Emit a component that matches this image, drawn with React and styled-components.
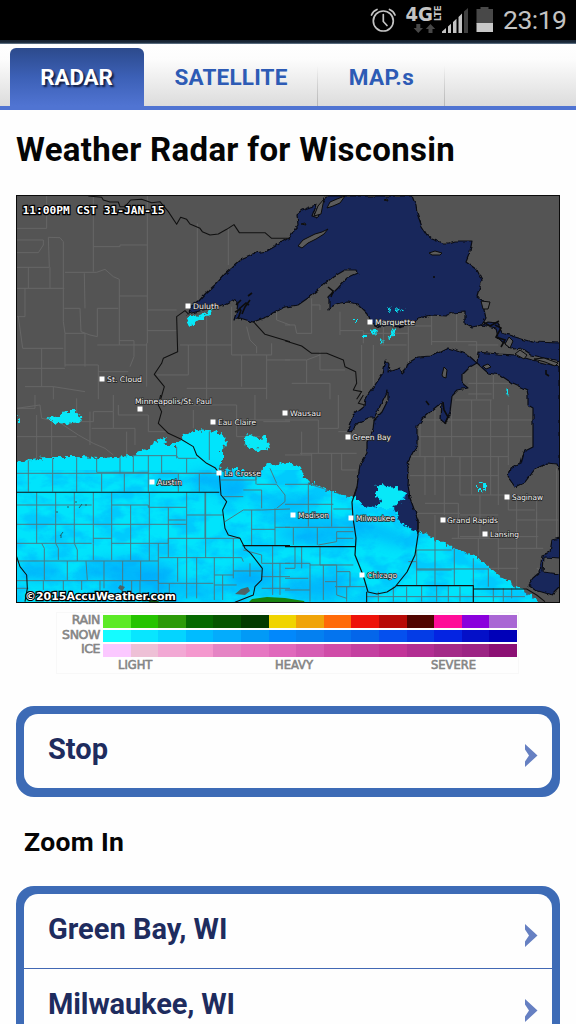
import React from 'react'
import { styled, createGlobalStyle } from 'styled-components'

const GlobalStyle = createGlobalStyle`
  * {
    box-sizing: border-box;
  }
  body {
    margin: 0;
    background: #fefefe;
    font-family: Roboto, "Liberation Sans", sans-serif;
  }
`;

const Page = styled.div`
  width: 576px;
  height: 1024px;
  overflow: hidden;
  display: flex;
  flex-direction: column;
  background: #fefefe;
`;

const StatusBar = styled.div`
  height: 40px;
  flex: none;
  background: #000;
  color: #c3c3c3;
  display: flex;
  justify-content: flex-end;
  align-items: center;
  padding-right: 9px;
`;

const Clock = styled.span`
  width: 64px;
  margin-left: 5px;
  font-size: 26.5px;
  line-height: 40px;
  white-space: nowrap;
  letter-spacing: -0.5px;
`;

const TopStrip = styled.div`
  height: 4px;
  flex: none;
  background: linear-gradient(#17212f 0, #1b2a3b 60%, #71869a 100%);
`;

const Tabs = styled.nav`
  height: 66px;
  flex: none;
  display: flex;
  align-items: flex-end;
  padding-left: 10px;
  border-bottom: 4px solid #5074d2;
  background: linear-gradient(#fff 0, #fcfcfc 25%, #dcdcdc 100%);
`;

const Tab = styled.a`
  width: ${(props) => props.$width}px;
  height: 58px;
  display: flex;
  align-items: center;
  justify-content: center;
  padding-right: ${(props) => (props.$active ? 1 : 0)}px;
  font-size: 22.5px;
  font-weight: 700;
  letter-spacing: ${(props) => props.$spacing || 0}px;
  color: ${(props) => (props.$active ? "#fff" : "#2d5bb5")};
  text-shadow: ${(props) => (props.$active ? "2px 2px 2px #101c40" : "none")};
  border-radius: 6px 6px 0 0;
  background: ${(props) =>
    props.$active
      ? "linear-gradient(#2c4a8c, #3c60b6 50%, #5074d2)"
      : "linear-gradient(rgba(150,150,150,0) 30%, #b8b8b8) right / 1.5px 100% no-repeat"};
`;

const Title = styled.h1`
  margin: 0;
  height: 85px;
  flex: none;
  padding-left: 16px;
  font-size: 33px;
  line-height: 80px;
  font-weight: 700;
  letter-spacing: 0.31px;
  color: #050505;
`;

const MapFrame = styled.div`
  width: 544px;
  height: 408px;
  flex: none;
  margin-left: 16px;
  svg {
    display: block;
  }
`;

const Legend = styled.div`
  width: 463px;
  height: 62px;
  flex: none;
  margin: 9px 0 0 56px;
  padding-top: 2px;
  border: 1px solid #f8f8f8;
  color: #858585;
  font-family: "DejaVu Sans", sans-serif;
  font-size: 12.5px;
  -webkit-text-stroke: 0.6px #858585;
`;

const LegendRow = styled.div`
  display: grid;
  grid-template-columns: 43px 414px;
  column-gap: 3px;
  height: 14.5px;
  line-height: 10px;
  text-align: right;
  letter-spacing: -0.4px;
`;

const Scale = styled.div`
  display: flex;
  height: 12.5px;
`;

const Swatch = styled.span`
  flex: 1;
  background: ${(props) => props.$color};
`;

const Levels = styled.div`
  display: grid;
  grid-template-columns: 157px 156px 50px;
  padding-left: 61px;
  line-height: 12px;
  font-size: 11.5px;
  letter-spacing: 0;
`;

const Card = styled.div`
  width: 544px;
  flex: none;
  margin: ${(props) => props.$top}px 0 0 16px;
  border: 8px solid #3d6bb6;
  border-bottom-width: 9px;
  border-radius: 18px;
  background: #3d6bb6;
`;

const CardBody = styled.div`
  border-radius: 14px;
  overflow: hidden;
  background: #fefefe;
`;

const Row = styled.div`
  height: ${(props) => (props.$divider ? 75 : 74)}px;
  display: flex;
  justify-content: space-between;
  padding: 0 14px 0 24px;
  border-bottom: ${(props) => (props.$divider ? "1.5px solid #4268b4" : "none")};
  font-size: 29px;
  line-height: 70px;
  font-weight: 700;
  letter-spacing: ${(props) => props.$spacing || 0}px;
  color: #1e2c5e;
  svg {
    margin-top: 29px;
  }
`;

const Heading = styled.h2`
  margin: 28px 0 0 24px;
  height: 34px;
  flex: none;
  font-size: 26.5px;
  line-height: 33px;
  font-weight: 700;
  letter-spacing: 0.35px;
  color: #050505;
`;

const legend = [
  {
    name: "RAIN",
    colors: ["#5cea26", "#26c400", "#2c9a08", "#056900", "#065500", "#033b00", "#f0d400", "#f0a408", "#ff6a08", "#ee1208", "#b80a06", "#500400", "#ff0c98", "#8a00dc", "#a966d4"],
  },
  {
    name: "SNOW",
    colors: ["#14fcff", "#08e6ff", "#04d4ff", "#00bcff", "#04acfc", "#029af6", "#0288fb", "#0480f0", "#0474ee", "#0466ea", "#0550ee", "#043ce6", "#0424e2", "#0410c8", "#0000b8"],
  },
  {
    name: "ICE",
    colors: ["#fbc8ff", "#eec0d6", "#f2a8d4", "#f498ce", "#e584c4", "#e676c2", "#e068bc", "#d65cb4", "#d04ca8", "#c440a0", "#c23498", "#b22e92", "#a42a88", "#9c2484", "#8c1074"],
  },
];

const cities = [
  { name: "Duluth", x: 188, y: 306, tx: 193, w: 26 },
  { name: "Marquette", x: 370, y: 322, tx: 375, w: 40 },
  { name: "St. Cloud", x: 102, y: 379, tx: 107, w: 35 },
  { name: "Minneapolis/St. Paul", x: 140, y: 409, tx: 135, ty: 401, w: 77 },
  { name: "Eau Claire", x: 213, y: 422, tx: 218, w: 38 },
  { name: "Wausau", x: 285, y: 413, tx: 290, w: 31 },
  { name: "Green Bay", x: 348, y: 437, tx: 352, w: 39 },
  { name: "La Crosse", x: 219, y: 473, tx: 224, w: 37 },
  { name: "Austin", x: 152, y: 482, tx: 157, w: 25 },
  { name: "Madison", x: 293, y: 515, tx: 298, w: 31 },
  { name: "Milwaukee", x: 351, y: 518, tx: 356, w: 39 },
  { name: "Grand Rapids", x: 443, y: 520, tx: 447, w: 51 },
  { name: "Saginaw", x: 507, y: 497, tx: 512, w: 31 },
  { name: "Lansing", x: 485, y: 534, tx: 490, w: 29 },
  { name: "Chicago", x: 362, y: 575, tx: 367, w: 30 },
];

const superior = "M188 314L190 307L198 302L206 293L217 283L225 274L232 268L243 258L255 253L267 251L279 244L290 237L294 230L298 225L297 214L302 210L310 207L316 205L312 216L318 218L321 206L326 196H412L416 206L417 213L422 227L427 235L432 239L442 243L449 243L455 241H472L470 252L466 262L473 267L477 270L482 280L479 290L477 297L485 302L484 310L486 318L482 325L472 327L465 323V312L452 313L445 316L432 315L418 318L410 324L398 327L388 325L380 327L370 322L367 314L357 304L348 302L340 303L335 305L331 307L329 310V297L338 288L347 278L358 273L357 270L345 270L333 277L323 285L317 291L308 298L298 305L285 307L277 310L267 317L253 322L240 318L234 320L237 310L238 302L232 300L223 305L207 309Z";

const michigan = "M477 363L468 355L458 351L448 348L438 353L432 356L418 357L408 363L406 369L402 373L400 368L388 372L389 364L386 360L383 373L375 385L365 399L364 406L353 415L347 431L351 432L358 423L368 418L374 418L381 404L388 390L388 400L382 412L374 420L373 430L367 442V453L360 465L357 487L352 502L353 518L356 538L355 555L363 575L368 592L377 594L387 592L395 587L407 572L415 555L418 535V520L410 498L408 485L409 470L407 463L417 445V427L423 418L430 412L442 402L441 420L445 423L450 412L452 396L458 390L468 388L462 383V375L470 367Z";

const huron = "M477 363L478 352L498 354L515 355L532 360L560 367V472L557 464L548 463L535 469L525 482L515 487L508 477L510 468L520 463L523 452L533 447V408L528 405V395L527 390L512 383L500 375L488 373Z";

const northChannel = "M482 325L488 322L498 323L502 333L515 337L532 342L560 343V361L545 358L532 355L523 349L514 350L505 344L498 338L496 328Z";

const erie = "M560 538L552 540L550 552L542 555L540 572L533 578L528 585L535 590L552 595L560 587V574L543 572L544 557L560 558Z";

const snow = "M14 462L32 460L50 457L77 457L100 458L130 456L140 451L148 449L153 442L167 438L163 445L177 445L183 435L197 430L218 432L227 440L222 450V463L217 470L237 469L258 475L267 463L290 464L300 467L304 477L308 482L328 490L355 498L365 507L379 506L382 501L377 497L379 487L384 484L389 488L396 486L399 492L406 494L405 499L397 503L394 508L400 522L412 530L428 535L452 547L478 558L498 575L518 588L535 598L539 606H14Z";

const landCounties = [
  // northern Minnesota and northwest Wisconsin
  ["10 190", "M20 115H110V18M20 150H100V165L85 188H20M20 232H118L115 142L150 143L160 155V395L165 430V530M55 232V295M120 232V295M20 295H163M250 18V245M250 170H330V165H412M165 247H260L285 238L310 260L328 268V465M223 250L225 355M163 355H210L213 425L240 435L262 440V355H325M328 318H412M412 18V460M412 360H500M412 422H500M45 295V380H20M25 380L38 475H160M95 475V590M20 535H165M165 430H225V530M262 465H330M328 452H372V500L360 530M165 525H265V628M330 465H410M45 590H130V628M130 590L225 605M265 545L355 545M410 460V590M562 100V330M655 115V225M590 370V465M510 465H665M535 465V555L440 555M665 350V495H785V460M710 410L720 450L740 470V490M590 465V628M695 495V590M530 595H770M770 495V628M770 510H840M800 360V390L840 405"],
  // upper Michigan and northeast Wisconsin
  ["285 190", "M80 325V430M80 345H105V360M0 405H30L35 430H80M165 365V435M165 422H235V460M235 430H370M295 378V465M370 410V530M285 465H365M440 378V465M440 455H575V490M515 370V455M370 408H440M550 465H640M230 465V620M265 465V590M0 510H65L105 495M65 510V580M20 580H135V628M105 485V540H180M550 580H735M575 535V628M625 555V628M550 612H620"],
  // southern Minnesota above the snow
  ["10 395", "M20 40L90 30L95 70L145 80L205 120L250 145L285 160L310 180M80 60V190M125 75V185M20 125H200M20 40H75V0M200 10V80H250V50H310V0M240 50V150M310 50V100H375V150M245 100H310M325 30V60H415V110H470M350 110V180M540 30H680V75H840M680 75V125H750M550 45V100M735 75V0M840 80H760"],
  // Wisconsin and lower Michigan
  ["285 395", "M0 75H100V100H160V0M50 110V180M0 180H80M80 175V260M45 175H215M140 175V285M170 175V225H215M100 100V175M160 110H190M400 75H740M400 125H740M380 185H670V210M405 30V185M450 0V300M500 50V185M560 15V300M617 15V300M670 30V185M510 15H620M375 242H640M420 185V300M478 185V360M525 185V300M640 185V330M585 300V430M420 325H520V430M395 355H525M525 300H670V345H750M695 300V575M755 300V460M525 425H760M450 360V440M580 430V480M640 370V525M500 430H640M640 460H775M600 520H700M755 520H760V570M695 375H820M815 220V430M525 360H640M755 350V400"],
];

const snowCounties = [
  ["10 395", "M20 235H620M55 190V290M128 190V290M200 187V290M260 187V232H415M343 235V290M275 235V290M330 187V235M370 182V235M415 180V290M455 180V235M500 155V190M505 235V290M530 190V235M568 235V290M455 235H605M368 182H500L505 190H560M598 110V195M20 330H245M305 330H415V337H530M530 360H640M20 388H530M20 445H245M250 430H305M305 445H475M475 430H690L685 425M20 498H445V445M448 488H695L700 500M20 557H445V565H610M80 292V445M137 292V445M193 292V445M250 292V445M305 292V495M362 330V495M418 292V498M475 337V488M530 292V565M587 292V488M585 292V430M95 445L103 460V555M137 445L145 460V495M193 445L202 465V498M250 445V495M172 498V555M228 498L232 555M282 498V580M338 498V600M392 498V555M445 498V610M503 488V560M560 488V610M613 488V615M670 430V550M475 430V445M527 375H475M613 540H670M613 570H680M670 528H755M160 557V585M215 557V585M100 557V585M270 557V585M365 557V600M390 555V600M530 565V610M478 565V610M638 540V615M20 580H55M633 255H738V220M738 240V268M700 285H755V340M640 305H700M840 342L755 345L700 345L645 380M740 268H800L825 300V320L800 340M780 220L800 265M725 345V450M725 403H795M795 340V450M795 397H840M700 465L755 480V505H840M788 452V600M755 545H840M720 505V545M810 505V600M755 580H840"],
  ["285 395", "M0 268H75L130 285M70 265V395M140 285V395M0 328H145M145 342H200M0 397H205M25 397V450M97 397V450M100 450L155 440V410H205M155 430H205M50 455V520M105 455V510H205M0 505H75V620M75 510H155V600L185 610M0 550H70M30 455V520H0M115 510V615M155 530H195V575H160M150 575H240M185 575V620M120 560H155M0 585H75M395 465V570M370 500H395V525H500M395 465H500M450 435V570M508 460V570M395 522H610M565 490V620M610 520V575M280 590V620M325 575V620M365 575V620M410 572V620M455 572V620M490 572V620M525 575V620M245 605H565M565 605H720M625 580V620M655 580V620M680 580V610"],
];

const borders = [
  // state and national lines
  ["10 190", "M235 18L275 22L280 30L300 36L325 36L330 50L345 50L362 30L395 28L425 38L450 35L475 65L500 103L512 82L530 88L540 102L570 115L577 125L600 135L625 132L650 118L672 104L688 128L765 128L785 145L840 145M535 372L525 362L500 380L503 485L460 505L455 520L433 553L463 590L452 628M730 395L765 433L840 455"],
  ["285 190", "M0 452L50 468L80 490L125 490L175 510L180 530L212 545L215 580L205 600L230 605L215 628"],
  ["10 395", "M452 0L445 30L455 50L445 85L475 115L512 132L550 155L560 180L590 205L615 218L628 235L633 300L650 320L638 345L645 400L655 420L690 430L705 460L722 475L757 520L755 555L735 575L730 600L675 622M20 292H628M698 452H840M20 485L30 515L50 540L52 580L45 620"],
  ["285 395", "M0 455H210M333 572H565V582H725L755 600L780 620M245 590V622M565 582V622M235 0L220 25L240 30"],
];

const outline = { fill: "none", strokeLinejoin: "round" };

function RadarMap() {
  return (
    <svg width="544" height="408" viewBox="16 195 544 408">
      <defs>
        <filter id="ragged" x="-5%" y="-15%" width="110%" height="130%" colorInterpolationFilters="sRGB">
          <feTurbulence type="fractalNoise" baseFrequency="0.24" numOctaves="2" seed="4" />
          <feDisplacementMap in="SourceGraphic" scale="9" xChannelSelector="R" yChannelSelector="G" />
        </filter>
        <filter id="coast" x="-5%" y="-5%" width="110%" height="110%" colorInterpolationFilters="sRGB">
          <feTurbulence type="fractalNoise" baseFrequency="0.15" numOctaves="2" seed="8" />
          <feDisplacementMap in="SourceGraphic" scale="4" xChannelSelector="R" yChannelSelector="G" />
        </filter>
        <filter id="grain" x="0" y="0" width="100%" height="100%" colorInterpolationFilters="sRGB">
          <feTurbulence type="fractalNoise" baseFrequency="0.04 0.07" numOctaves="5" seed="12" />
          <feColorMatrix values="0 0 0 0 0  0 0 0 0 0.66  0 0 0 0 1  3.4 0 0 0 -1.35" />
        </filter>
        <filter id="soft" x="-50%" y="-50%" width="200%" height="200%" colorInterpolationFilters="sRGB">
          <feGaussianBlur stdDeviation="7" />
        </filter>
        <clipPath id="snowClip">
          <path d={snow} />
        </clipPath>
      </defs>

      <rect x="16" y="195" width="544" height="408" fill="#545454" />
      <g stroke="#666" strokeWidth="3" {...outline}>
        {landCounties.map(([at, d]) => (
          <path key={at} transform={`translate(${at}) scale(.3333)`} d={d} />
        ))}
      </g>

      <g fill="#18275b" stroke="#0a0c14" strokeWidth="1.2" strokeLinejoin="round" filter="url(#coast)">
        <path d={superior} />
        <path d={michigan} />
        <path d={huron} />
        <path d={northChannel} />
        <path d={erie} />
      </g>
      <g fill="#5b5b5b" stroke="#0c0c0c" strokeWidth="1">
        <path d="M298 246L303 240L309 237L315 234L322 232L328 229L324 234L316 239L308 243L302 248ZM314 216L318 206L324 199L321 214ZM327 208L330 202L337 199L345 196L340 203L333 206ZM429 253L435 251L442 253L440 255H432ZM384 200L387 199L388 201ZM442 375L444 367L447 370L446 378L443 377ZM301 224L305 223L306 225ZM505 344L509 337L513 341L510 348ZM515 354L520 350L527 355L524 359ZM534 359L544 358L558 363L555 366L545 362ZM483 366L488 364L491 367L486 369ZM481 301L490 302L488 309L483 309Z" />
        <path d="M236 305L241 300M239 309L246 303L249 305M242 314L245 307L250 300M238 319L241 310M235 312L241 309M248 296L252 293M328 287L333 291L331 297M434 276V278M495 325L501 328L496 337L505 340L501 347M483 322L490 326L499 321M399 327L406 324L411 321M546 370V374L549 376M443 402L444 410L448 417L445 424M426 401L429 405" fill="none" strokeWidth="1.6" />
      </g>

      <path d={snow} fill="#00e4fc" filter="url(#ragged)" />
      <g clipPath="url(#snowClip)">
        <rect x="16" y="470" width="544" height="133" filter="url(#grain)" opacity=".42" />
        <g fill="#00a4fb" filter="url(#soft)" opacity=".72">
          <ellipse cx="130" cy="571" rx="46" ry="12" />
          <ellipse cx="213" cy="481" rx="26" ry="9" />
          <ellipse cx="234" cy="490" rx="15" ry="9" />
          <ellipse cx="319" cy="534" rx="44" ry="9" />
          <ellipse cx="380" cy="532" rx="34" ry="7" transform="rotate(20 380 532)" />
          <ellipse cx="255" cy="578" rx="26" ry="13" />
          <ellipse cx="320" cy="588" rx="34" ry="12" />
          <ellipse cx="290" cy="505" rx="28" ry="9" />
          <ellipse cx="40" cy="571" rx="23" ry="9" />
          <ellipse cx="170" cy="589" rx="60" ry="7" />
        </g>
      </g>
      <g fill="#08e8f8" filter="url(#ragged)">
        <path d="M46 417L58 418L64 411L77 411L76 416L84 418L80 422L66 424L53 422ZM243 437L252 435L257 438L267 437L269 445L266 451L257 450L245 445ZM17 416L20 418V422H17ZM187 324L191 315L199 316L214 308L209 315L199 320L190 327ZM376 488L383 483L388 488L398 487L405 494L400 501L394 508H378L382 500L377 497Z" />
        <path d="M371 326L375 331L376 336L372 332ZM387 307L391 309L390 313ZM396 307L400 308L398 313ZM388 337L392 331L395 333L391 338ZM380 338L383 341L380 343ZM401 309L404 310L401 312ZM363 335H367V338H363ZM354 319H357V321H354ZM375 308L378 311M505 389L509 391L508 396ZM392 325L396 329L394 333ZM475 485H478V488H475ZM479 482L482 482L480 485ZM483 484H487V487H483ZM477 489H480V491H477ZM483 489L485 489L483 492Z" />
      </g>

      <g clipPath="url(#snowClip)" stroke="#4a7a86" strokeWidth="3" {...outline}>
        {snowCounties.map(([at, d]) => (
          <path key={at} transform={`translate(${at}) scale(.3333)`} d={d} />
        ))}
      </g>
      <path d="M248 603L252 599L267 597L285 598L304 601L305 603Z" fill="#188410" />
      <path d="M147 603L151 600L158 601L161 603Z" fill="#125a14" />
      <path d="M235 594L241 589L248 587L250 591L245 595ZM118 588L120 585L125 587L122 591Z" fill="#4c6266" />
      <path d="M60 536L63 532M61 535V538M67 507H69M75 502H77M79 508L82 504M85 505H87M56 512H58" fill="none" stroke="#1d5f68" />
      <g stroke="#101010" strokeWidth="3.2" {...outline}>
        {borders.map(([at, d]) => (
          <path key={at} transform={`translate(${at}) scale(.3333)`} d={d} />
        ))}
      </g>
      <path d="M357 487L352 502L353 518L356 538L355 555L363 575L368 592L377 594L387 592L395 587L407 572L415 555L418 535V520" stroke="#111" strokeWidth="1.2" {...outline} />

      <g fontFamily="DejaVu Sans, sans-serif" fontSize="7.6" fill="#f4f4f4" stroke="#222" strokeWidth="1.4" paintOrder="stroke">
        {cities.map((c) => (
          <g key={c.name}>
            <rect x={c.x - 2.5} y={c.y - 2.5} width="5" height="5" fill="#fff" stroke="none" />
            <text x={c.tx} y={(c.ty || c.y) + 3} textLength={c.w} lengthAdjust="spacingAndGlyphs">{c.name}</text>
          </g>
        ))}
      </g>
      <g fill="#fff" stroke="#000" strokeWidth="2.4" paintOrder="stroke" fontWeight="700">
        <text x="22.5" y="214" fontFamily="DejaVu Sans Mono, monospace" fontSize="10.5" textLength="142" lengthAdjust="spacingAndGlyphs">11:00PM CST 31-JAN-15</text>
        <text x="25" y="599.5" fontFamily="DejaVu Sans, sans-serif" fontSize="10.5" textLength="151" lengthAdjust="spacingAndGlyphs">©2015AccuWeather.com</text>
      </g>
      <rect x="16.5" y="195.5" width="543" height="407" fill="none" stroke="#0b0b0b" />
    </svg>
  );
}

function StatusIcons() {
  return (
    <svg width="130" height="40" viewBox="368 0 130 40">
      <g fill="none" stroke="#c3c3c3" strokeWidth="1.7" strokeLinecap="round">
        <circle cx="383.3" cy="21" r="10" />
        <path d="M383.3 14.5V21.5L387 25.5M371.5 15Q373 11 377 9.5M395 15Q393.5 11 389.5 9.5" />
      </g>
      <g fill="#c3c3c3" fontFamily="DejaVu Sans, sans-serif" fontWeight="700">
        <text x="405.5" y="20.5" fontSize="19.5" textLength="27.5" lengthAdjust="spacingAndGlyphs">4G</text>
        <text transform="translate(440.5 21) rotate(-90)" fontSize="9" textLength="15.5" lengthAdjust="spacingAndGlyphs">LTE</text>
      </g>
      <path d="M416.300 24H420.300V28H423L418.300 33L413.600 28H416.300ZM428.500 33H432.500V29H435.200L430.500 24L425.800 29H428.500Z" fill="#484848" />
      <path d="M442 33V31.500L446 28V33ZM448 33V26.500L451 23.700V33ZM453 33V22L456.500 18.700V33ZM458.500 33V17L462 13.500V33Z" fill="#c3c3c3" />
      <path d="M464 33V11.500L468 8V33Z" fill="#404040" />
      <path d="M476.500 9H480.500V7H488.500V9H493V24H476.500Z" fill="#484848" />
      <rect x="476.500" y="23" width="16.500" height="9" fill="#c8c8c8" />
    </svg>
  );
}

const Chevron = () => (
  <svg width="14" height="25" viewBox="0 0 14 25">
    <path d="M1 1L13.500 12.500L1 24V18.500L5 12.500L1 6.500Z" fill="#6680c2" />
  </svg>
);

export default function App() {
  return (
    <Page>
      <GlobalStyle />
      <StatusBar>
        <StatusIcons />
        <Clock>23:19</Clock>
      </StatusBar>
      <TopStrip />
      <Tabs>
        <Tab $width={134} $spacing={-0.2} $active>RADAR</Tab>
        <Tab $width={174} $spacing={0.2}>SATELLITE</Tab>
        <Tab $width={127} $spacing={0.4}>MAP.s</Tab>
      </Tabs>
      <Title>Weather Radar for Wisconsin</Title>
      <MapFrame>
        <RadarMap />
      </MapFrame>
      <Legend>
        {legend.map((row) => (
          <LegendRow key={row.name}>
            {row.name}
            <Scale>
              {row.colors.map((color) => (
                <Swatch key={color} $color={color} />
              ))}
            </Scale>
          </LegendRow>
        ))}
        <Levels>
          <span>LIGHT</span>
          <span>HEAVY</span>
          <span>SEVERE</span>
        </Levels>
      </Legend>
      <Card $top={32}>
        <CardBody>
          <Row>Stop<Chevron /></Row>
        </CardBody>
      </Card>
      <Heading>Zoom In</Heading>
      <Card $top={27}>
        <CardBody>
          <Row $divider>Green Bay, WI<Chevron /></Row>
          <Row $spacing={-0.12}>Milwaukee, WI<Chevron /></Row>
        </CardBody>
      </Card>
    </Page>
  )
}
